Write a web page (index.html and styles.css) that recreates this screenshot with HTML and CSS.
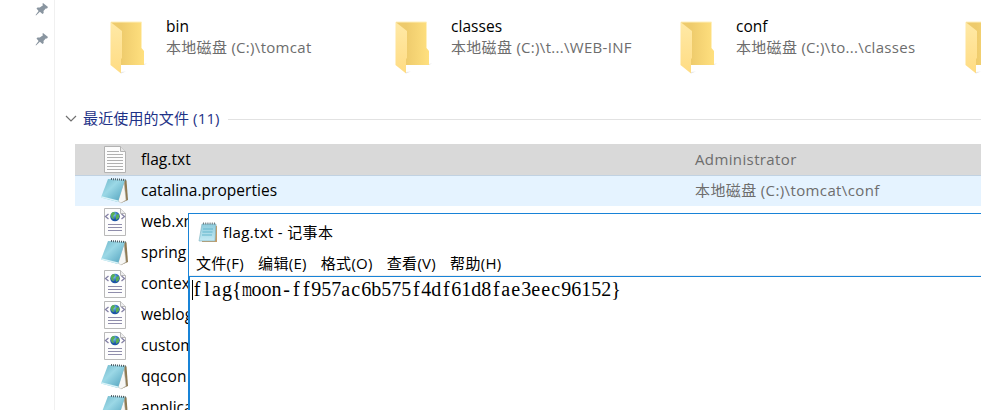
FILE: index.html
```html
<!DOCTYPE html>
<html lang="zh-CN">
<head>
<meta charset="utf-8">
<title>flag.txt - 记事本</title>
<link rel="stylesheet" href="styles.css">
</head>
<body>
<svg class="defs" width="0" height="0" aria-hidden="true">
  <defs>
    <linearGradient id="fb" x1="0" y1="0" x2="1" y2="0"><stop offset=".3" stop-color="#eecb6c"/><stop offset="1" stop-color="#ffe07f"/></linearGradient>
    <linearGradient id="ff" x1="0" y1="0" x2="0" y2="1"><stop offset="0" stop-color="#ffe9a6"/><stop offset="1" stop-color="#ffdc83"/></linearGradient>
    <linearGradient id="nb" x1="0" y1="0" x2="1" y2="1"><stop offset="0" stop-color="#6db4c8"/><stop offset=".4" stop-color="#9bd8e6"/><stop offset="1" stop-color="#4a9dba"/></linearGradient>
    <linearGradient id="nt" x1="0" y1="0" x2="0" y2="1"><stop offset="0" stop-color="#8dcbdc"/><stop offset="1" stop-color="#c4eaf4"/></linearGradient>
    <radialGradient id="gl" cx=".4" cy=".3"><stop offset="0" stop-color="#7fc9ef"/><stop offset="1" stop-color="#1d55a6"/></radialGradient>
  </defs>
  <symbol id="pin" viewBox="0 0 14 14"><path d="M8 1l5 4-1 1.500-1.300-.1L8.500 9l.2 2-1.200 1-2.600-2.200L1 13.500.6 13l3-4L1.500 6.600l1-1.100 2.300.1L8 3.300 7.400 2z" fill="#8995a0"/></symbol>
  <symbol id="folder" viewBox="0 0 40 54">
    <path d="M11 51l5-.5-5 2zM33 43l4-.5-3 1.500z" fill="#e6e6e6"/>
    <path d="M1 1H31.500V27L34 30V44H2z" fill="url(#fb)"/>
    <path d="M.5 1L12 10v27l-1 1v14.500L.5 44z" fill="url(#ff)"/>
    <path d="M1 1H31.500V27" fill="none" stroke="#fff0be"/>
  </symbol>
  <symbol id="txt" viewBox="0 0 28 30">
    <path d="M3.500 1.500h16l5 5v21h-21z" fill="#fcfcfc" stroke="#b2b2b2"/>
    <path d="M19.500 1.500v5h5" fill="#e6e6e6" stroke="#b2b2b2"/>
    <path d="M6 6.500h12M6 9.500h16M6 12.500h16M6 15.500h16M6 18.500h16M6 21.500h16M6 24.500h16" stroke="#b0b0b0"/>
  </symbol>
  <symbol id="note" viewBox="0 0 28 30">
    <path d="M22 3l3.500 1.500L27 24 20 27z" fill="#8f7a52"/>
    <path d="M23 6L17 25l3 2 5-3z" fill="#f7f7f5" stroke="#b7b7b0" stroke-width=".5"/>
    <path d="M7 3L24 4 17 26 0 21.500z" fill="url(#nb)"/>
    <path d="M0 21.500l17 4.500.5-1.400L.5 20.200z" fill="#d9f3f8"/>
    <path d="M10 3L24.500 4" stroke="#4d5f68" stroke-width="2" stroke-dasharray="1 1"/>
  </symbol>
  <symbol id="xml" viewBox="0 0 28 30">
    <path d="M3.500 1.500h16l5 5v22h-21z" fill="#fdfdfd" stroke="#b9b9b9"/>
    <path d="M19.500 1.500v5h5" fill="#eee" stroke="#b9b9b9"/>
    <circle cx="14" cy="9.500" r="4.800" fill="url(#gl)"/>
    <path d="M10 7c2-3 4-2 4 0l-2 2 1 3c-3 0-3-3-3-5zM15 8l3-1v4l-3 2z" fill="#58ae55"/>
    <path d="M7.500 7L4.500 9.500l3 2.500M20.500 7l3 2.500-3 2.500" fill="none" stroke="#8582a5" stroke-width="1.300"/>
    <path d="M7 17.500h14M7 20.500h14M7 23.500h14" stroke="#8f8dab" stroke-width="1.200"/>
  </symbol>
  <symbol id="pad" viewBox="0 0 20 21">
    <path d="M17 3l2 1v16H4v-1z" fill="#c59b65"/>
    <path d="M4 2h14l-1 17H1z" fill="url(#nt)" stroke="#79afbd" stroke-width=".6"/>
    <path d="M5 7h10M4.500 10h10M4 13h10" stroke="#65b5cc" stroke-width="1.200"/>
    <path d="M5 1.500h12" stroke="#707b80" stroke-width="2" stroke-dasharray="1 1.200"/>
  </symbol>
</svg>

<div class="explorer">
  <aside class="sidebar">
    <svg class="pin"><use href="#pin"/></svg>
    <svg class="pin"><use href="#pin"/></svg>
  </aside>
  <main class="content">
    <section class="folders">
      <div class="folder"><svg class="folder-icon"><use href="#folder"/></svg><div><div class="name">bin</div><div class="path">本地磁盘 (C:)\tomcat</div></div></div>
      <div class="folder"><svg class="folder-icon"><use href="#folder"/></svg><div><div class="name">classes</div><div class="path">本地磁盘 (C:)\t...\WEB-INF</div></div></div>
      <div class="folder"><svg class="folder-icon"><use href="#folder"/></svg><div><div class="name">conf</div><div class="path">本地磁盘 (C:)\to...\classes</div></div></div>
      <div class="folder"><svg class="folder-icon"><use href="#folder"/></svg></div>
    </section>
    <header class="group">
      <svg class="chevron" viewBox="0 0 12 8"><path d="M1 1l5 5 5-5" fill="none" stroke="#707070" stroke-width="1.200"/></svg>
      <h2>最近使用的文件 (11)</h2><span class="rule"></span>
    </header>
    <section class="files">
      <div class="row selected"><svg><use href="#txt"/></svg><span class="file">flag.txt</span><span class="location">Administrator</span></div>
      <div class="row hover"><svg><use href="#note"/></svg><span class="file">catalina.properties</span><span class="location">本地磁盘 (C:)\tomcat\conf</span></div>
      <div class="row"><svg><use href="#xml"/></svg><span class="file">web.xml</span></div>
      <div class="row"><svg><use href="#note"/></svg><span class="file">spring</span></div>
      <div class="row"><svg><use href="#xml"/></svg><span class="file">context</span></div>
      <div class="row"><svg><use href="#xml"/></svg><span class="file">weblog</span></div>
      <div class="row"><svg><use href="#xml"/></svg><span class="file">custom</span></div>
      <div class="row"><svg><use href="#note"/></svg><span class="file">qqcon</span></div>
      <div class="row"><svg><use href="#note"/></svg><span class="file">applica</span></div>
    </section>
  </main>
</div>

<div class="notepad">
  <div class="titlebar"><svg><use href="#pad"/></svg><span>flag.txt - 记事本</span></div>
  <nav class="menu"><span>文件(F)</span><span>编辑(E)</span><span>格式(O)</span><span>查看(V)</span><span>帮助(H)</span></nav>
  <div class="editor"><i class="caret"></i><span class="n">f</span><span class="l">l</span><span class="a">a</span>g{<span class="m">m</span>oon<span class="n">-</span><span class="n">f</span><span class="n">f</span>957<span class="a">ac</span>6b575<span class="n">f</span>4d<span class="n">f</span>61d8<span class="n">f</span><span class="a">ae</span>3<span class="a">eec</span>96152}</div>
</div>
</body>
</html>
```

FILE: styles.css
```css
* { box-sizing: border-box; }
body {
  margin: 0;
  width: 981px;
  height: 410px;
  overflow: hidden;
  position: relative;
  background: #fff;
  color: #000;
  font: 15px/21px "Open Sans", "Noto Sans CJK SC", sans-serif;
  white-space: nowrap;
}
svg { display: block; flex: none; }
.defs { position: absolute; }
.explorer { display: flex; height: 410px; overflow: hidden; }
.sidebar {
  width: 55px;
  flex: none;
  border-right: 1px solid #f0f0f0;
  padding: 2px 0 0 35px;
}
.pin { width: 14px; height: 14px; margin-bottom: 16px; }
.content { width: 926px; flex: none; padding-left: 20px; overflow: hidden; }
.folders { display: flex; height: 108px; padding: 16px 0 0 35px; overflow: hidden; }
.folder { display: flex; width: 285px; flex: none; }
.folder-icon { width: 40px; height: 54px; margin: 5px 16px 0 0; }
.name, .file { font-size: 15.5px; letter-spacing: 0.04px; }
.path, .location { color: #6d6d6d; letter-spacing: 0.3px; }
.location { letter-spacing: 0.38px; }
.group { display: flex; align-items: center; height: 21px; margin-left: -10px; }
.chevron { width: 12px; height: 8px; margin-right: 6px; }
h2 { margin: 0; font-size: 15px; font-weight: 400; letter-spacing: 0.15px; color: #1e3287; }
.rule { flex: 1; height: 1px; margin: 2px 0 0 8px; background: #e2e2e2; }
.files { margin-top: 15px; }
.row { display: flex; align-items: center; height: 31px; padding-left: 26px; }
.row svg { width: 28px; height: 30px; margin-right: 12px; }
.file { width: 554px; }
.selected { background: #d9d9d9; }
.hover { background: #e5f3ff; box-shadow: inset 0 1px #c1d2e2; }
.notepad {
  position: absolute;
  left: 188px;
  top: 213px;
  right: 0;
  bottom: 0;
  overflow: hidden;
  background: #fff;
  border: solid #1883d7;
  border-width: 1px 0 0 1px;
}
.titlebar { display: flex; align-items: center; height: 37px; padding-left: 9px; gap: 5px; letter-spacing: 0.35px; }
.titlebar svg { width: 20px; height: 21px; }
.menu {
  display: flex;
  gap: 14px;
  height: 25px;
  padding-left: 7px;
  letter-spacing: 0.3px;
  line-height: 25px;
  border-bottom: 1px solid #f0f0f0;
}
.editor {
  height: 134px;
  border: solid #1883d7;
  border-width: 1px 0 0 1px;
  padding-left: 2px;
  font: 20px/25px "Liberation Serif", serif;
}
.caret { display: inline-block; width: 1px; height: 20px; margin-right: -1px; background: #000; vertical-align: -4px; }
.n { padding: 0 1.65px; }
.l { padding: 0 2.2px; }
.a { letter-spacing: 1.12px; }
.m { display: inline-block; width: 10px; transform: scaleX(0.64); transform-origin: 0 50%; }
```
